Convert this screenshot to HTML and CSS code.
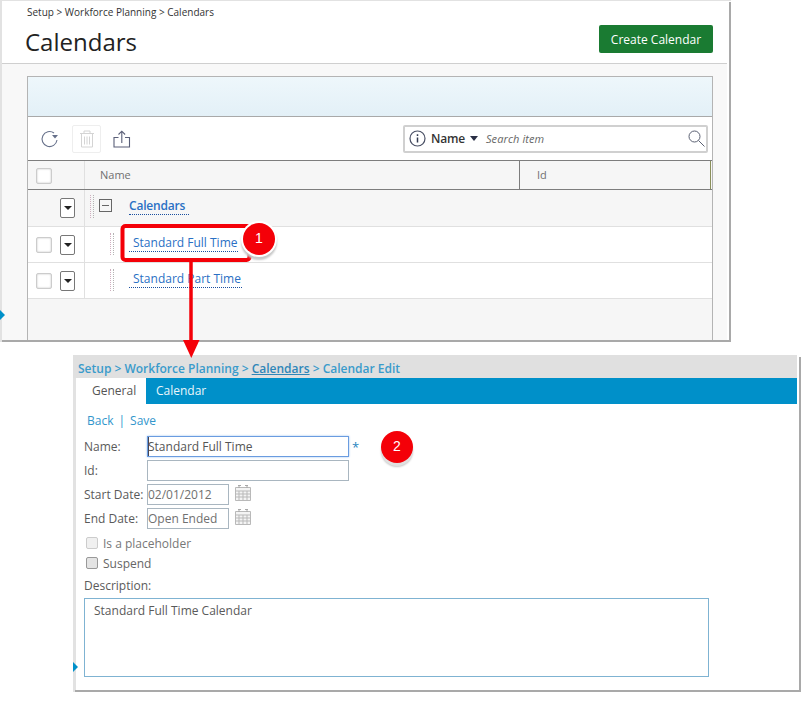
FILE: index.html
```html
<!DOCTYPE html>
<html lang="en">
<head>
<meta charset="utf-8">
<title>Calendars</title>
<link rel="stylesheet" href="styles.css">
</head>
<body>
<section class="win win-list">
  <header class="list-head">
    <div>
      <div class="crumbs">Setup &gt; Workforce Planning &gt; Calendars</div>
      <h1>Calendars</h1>
    </div>
    <button class="create">Create Calendar</button>
  </header>
  <div class="list-body">
    <div class="grid">
      <div class="band"></div>
      <div class="toolbar">
        <svg class="ic-refresh" width="20" height="20" viewBox="0 0 20 20"><path d="M17 11a7.500 7.500 0 1 1-3-7" fill="none" stroke="#66708a" stroke-width="1.100"/><path d="M13 7h6l-3 3.500z" fill="#66708a" transform="translate(-1 -1)"/></svg>
        <span class="trash"><svg width="16" height="18" viewBox="0 0 16 18"><path d="M1 3.500h14M5 3V1h6v2M2.500 4v13h11V4M5.500 6.500v8M8 6.500v8M10.500 6.500v8" fill="none" stroke="#d4d4d4"/></svg></span>
        <svg class="ic-share" width="18" height="18" viewBox="0 0 18 18"><path d="M5.500 7.500H1v9.500h15.500V7.500H12M8.800 13V1.500M5.500 4.500l3.300-3.300 3.300 3.300" fill="none" stroke="#5a5f78" stroke-width="1.100"/></svg>
        <div class="search">
          <svg width="17" height="17" viewBox="0 0 17 17"><circle cx="8.500" cy="8.500" r="7.500" fill="#fff" stroke="#4a5065" stroke-width="1.200"/><path d="M8.500 7.500v5M8.500 4.300v1.700" stroke="#333a50" stroke-width="1.500"/></svg>
          <span class="s-field">Name</span><i class="caret"></i>
          <span class="s-hint">Search item</span>
          <svg class="s-glass" width="17" height="17" viewBox="0 0 17 17"><circle cx="6.500" cy="6.500" r="5.500" fill="none" stroke="#5a6072"/><path d="M10.500 10.500l6 6" stroke="#5a6072"/></svg>
        </div>
      </div>
      <div class="g-head">
        <div class="c-sel"><span class="chk"></span></div>
        <div class="c-name">Name</div>
        <div class="c-id">Id</div>
      </div>
      <div class="g-row r-group">
        <div class="c-sel"><span class="drop"></span></div>
        <div class="c-tree">
          <span class="grip"></span>
          <span class="minus"></span>
          <a class="lnk strong">Calendars</a>
        </div>
      </div>
      <div class="g-row">
        <div class="c-sel"><span class="chk"></span><span class="drop"></span></div>
        <div class="c-tree sub">
          <span class="grip"></span>
          <a class="lnk">Standard Full Time</a>
        </div>
      </div>
      <div class="g-row">
        <div class="c-sel"><span class="chk"></span><span class="drop"></span></div>
        <div class="c-tree sub">
          <span class="grip"></span>
          <a class="lnk">Standard Part Time</a>
        </div>
      </div>
      <div class="g-rest"></div>
    </div>
  </div>
  <i class="pin pin-a"></i>
</section>

<section class="win win-edit">
  <div class="e-crumbs">Setup &gt; Workforce Planning &gt; <u>Calendars</u> &gt; Calendar Edit</div>
  <div class="tabs"><span class="tab on">General</span><span class="tab">Calendar</span></div>
  <div class="form">
    <div class="actions"><a>Back</a><span class="sep">|</span><a>Save</a></div>
    <div class="f-row"><label>Name:</label><input class="in wide focus" value="Standard Full Time"><span class="req">*</span></div>
    <div class="f-row"><label>Id:</label><input class="in wide"></div>
    <div class="f-row"><label>Start Date:</label><input class="in date" value="02/01/2012">
      <svg class="cal" width="16" height="17" viewBox="0 0 16 17"><path d="M.5 3.500h15v13H.5zM.5 7h15M.5 10h15M.5 13h15M4 7v9.500M8 7v9.500M12 7v9.500" fill="#f4f4f4" stroke="#b9b9b9"/><path d="M3 1.500h3M10 1.500h3M4 1v3M12 1v3" stroke="#a8a8a8" fill="none"/></svg></div>
    <div class="f-row"><label>End Date:</label><input class="in date" value="Open Ended">
      <svg class="cal" width="16" height="17" viewBox="0 0 16 17"><path d="M.5 3.500h15v13H.5zM.5 7h15M.5 10h15M.5 13h15M4 7v9.500M8 7v9.500M12 7v9.500" fill="#f4f4f4" stroke="#b9b9b9"/><path d="M3 1.500h3M10 1.500h3M4 1v3M12 1v3" stroke="#a8a8a8" fill="none"/></svg></div>
    <div class="c-row dis"><span class="box"></span>Is a placeholder</div>
    <div class="c-row"><span class="box dark"></span>Suspend</div>
    <div class="d-label">Description:</div>
    <div class="desc">Standard Full Time Calendar</div>
  </div>
  <i class="pin pin-b"></i>
</section>

<svg class="marks" width="812" height="703" viewBox="0 0 812 703">
  <rect x="122.500" y="226" width="127" height="34" rx="3" fill="none" stroke="#f40008" stroke-width="4"/>
  <path d="M191 261v80" stroke="#f40008" stroke-width="3.500"/>
  <path d="M183 340h16.500l-8.200 18z" fill="#f40008"/>
</svg>
<span class="badge b1">1</span>
<span class="badge b2">2</span>
</body>
</html>
```

FILE: styles.css
```css
* { box-sizing: border-box; }
html, body { margin: 0; padding: 0; background: #fff; }
body { width: 812px; height: 703px; position: relative; overflow: hidden; font-family: "Open Sans", "Liberation Sans", sans-serif; font-size: 12px; color: #555; }
a { color: inherit; text-decoration: none; }

.win { position: absolute; display: flex; flex-direction: column; background: #fff; }
.win-list { left: 0; top: 0; width: 731px; height: 342px; padding: 1px 4px 2px 2px; background: #fff; border-top: 1px solid #e2e2e2; box-shadow: inset 2px 0 0 #e2e2e2; }
.win-list::after { content: ""; position: absolute; left: 2px; right: 0; bottom: 0; height: 2px; background: #a9a9a9; }
.win-list::before { content: ""; position: absolute; top: 1px; right: 0; bottom: 0; width: 2px; background: #a9a9a9; }

.list-head { height: 62px; flex: none; display: flex; justify-content: space-between; padding: 0 14px 0 25px; border-bottom: 1px solid #cfcfcf; background: #fff; }
.crumbs { font-size: 10px; line-height: 14px; margin-top: 3px; color: #333; }
h1 { margin: 7px 0 0 -2px; font-size: 24px; font-weight: 400; line-height: 32px; color: #222; }
.create { margin-top: 23px; width: 114px; height: 28px; border: 0; border-radius: 2px; background: #1a7b32; color: #fff; font: 12px "Open Sans", sans-serif; padding: 0; }

.list-body { flex: 1; min-height: 0; padding: 12px 14px 0 25px; background: #f8f8f8; }
.grid { height: 265px; border: 1px solid #b4b4b4; border-bottom: 0; display: flex; flex-direction: column; background: #f6f6f6; }
.band { height: 40px; flex: none; background: linear-gradient(#eef7fb, #e3f0f7); border-bottom: 1px solid #a9a9a9; }
.toolbar { height: 44px; flex: none; background: #fff; border-bottom: 1px solid #7d7d7d; display: flex; align-items: center; padding: 0 5px 0 12px; }
.ic-refresh { margin-top: 1px; }
.trash { width: 29px; height: 28px; margin-left: 12px; border: 1px solid #eee; border-radius: 2px; display: flex; align-items: center; justify-content: center; }
.ic-share { margin-left: 12px; margin-top: 1px; }
.search { margin-left: auto; margin-right: -1px; width: 305px; height: 28px; border: 2px solid #d0d0d0; border-radius: 2px; display: flex; align-items: center; padding-left: 4px; background: #fff; }
.s-field { margin-left: 5px; font-weight: 600; color: #333; font-size: 12px; letter-spacing: -.2px; }
.caret { margin-left: 5px; border: 4px solid transparent; border-top: 5px solid #2a2f45; border-bottom: 0; }
.s-hint { margin-left: 8px; font-style: italic; font-size: 11px; color: #666; letter-spacing: .1px; }
.s-glass { margin-left: auto; margin-right: 1px; }

.g-head { height: 29px; flex: none; display: flex; border-bottom: 1px solid #7d7d7d; background: #f6f6f6; font-size: 11px; color: #707070; }
.c-sel { width: 57px; flex: none; display: flex; align-items: center; justify-content: flex-end; padding-right: 9px; gap: 8px; border-right: 1px solid #e0e0e0; }
.g-head .c-sel { justify-content: flex-start; padding: 1px 0 0 8px; }
.c-name { width: 434px; flex: none; padding: 6px 0 0 15px; }
.c-id { flex: 1; margin-right: 1px; padding: 6px 0 0 17px; border-left: 1px solid #7d7d7d; border-right: 1px solid #8a8f5a; }
.chk { width: 16px; height: 16px; border: 1px solid #ccc; border-radius: 2px; background: #fff; box-shadow: inset 0 0 2px #bbb; flex: none; }
.drop { width: 15px; height: 20px; border: 1px solid #777; border-radius: 2px; background: #fff; display: flex; align-items: center; justify-content: center; flex: none; }
.drop::after { content: ""; border: 4px solid transparent; border-top: 4px solid #222; border-bottom: 0; }

.g-row { height: 36px; flex: none; display: flex; border-bottom: 1px solid #e0e0e0; background: #fff; }
.r-group { height: 37px; background: #f6f6f6; }
.c-tree { flex: 1; display: flex; align-items: center; padding-left: 5px; position: relative; }
.grip { width: 4px; height: 23px; margin-top: -4px; border-left: 1px dotted #d0aebf; border-right: 1px dotted #b4b4b4; flex: none; }
.minus { width: 13px; height: 13px; margin: -5px 0 0 5px; border: 1px solid #666; position: relative; flex: none; }
.minus::after { content: ""; position: absolute; left: 2px; right: 2px; top: 5px; height: 1px; background: #666; }
.lnk { color: #2a70c4; font-size: 12px; line-height: 16px; border-bottom: 1px dotted #1a4fa0; padding: 0 1px 0 4px; }
.strong { font-weight: 600; letter-spacing: -.2px; padding: 0 1px 0 0; margin: -3px 0 0 17px; width: 60px; }
.sub { padding-left: 25px; }
.sub .grip { height: 22px; margin-top: -1px; }
.sub .lnk { margin: -3px 0 0 15px; }
.g-rest { flex: 1; }

.pin { position: absolute; width: 0; height: 0; border: 5px solid transparent; border-left: 5px solid #0090c9; border-right: 0; }
.pin-a { left: 0; top: 309px; }
.pin-b { left: 0; top: 307px; }

.win-edit { left: 73px; top: 355px; width: 728px; height: 337px; padding: 0 4px 2px 3px; box-shadow: inset 3px 0 0 #e2e2e2; }
.win-edit::before { content: ""; position: absolute; top: 2px; right: 0; bottom: 0; width: 2px; background: #a9a9a9; }
.win-edit::after { content: ""; position: absolute; left: 2px; right: 0; bottom: 0; height: 2px; background: #a9a9a9; }
.e-crumbs { margin-left: -3px; height: 23px; background: #e0e0e0; padding: 6px 0 0 5px; font-size: 12px; font-weight: 600; line-height: 15px; color: #3a9bcb; flex: none; }
.e-crumbs u { color: #2f86b8; }
.tabs { height: 26px; flex: none; display: flex; background: #0090c9; font-size: 12px; line-height: 26px; color: #eaf6fb; }
.tab { padding: 0 10px; }
.tab.on { width: 70px; padding: 0 0 0 16px; background: #fff; color: #555; }
.form { flex: 1; padding: 9px 0 0 8px; position: relative; }
.actions { height: 16px; line-height: 16px; padding-left: 3px; color: #3296cc; display: flex; }
.sep { margin: 0 5px; color: #3296cc; }
.f-row { display: flex; align-items: center; height: 24px; }
.actions + .f-row { margin-top: 5px; }
label { width: 63px; flex: none; padding-top: 1px; font-size: 12px; color: #5a5a5a; }
.in { height: 21px; border: 1px solid #a9b6c0; padding: 1px 0 0; font: 12px "Open Sans", sans-serif; color: #707070; outline: 0; background: #fff; }
.wide { width: 202px; }
.date { width: 82px; }
.focus { border-color: #6a9ce0; box-shadow: 0 0 2px #a0c4f0, inset 1px 0 0 #445; color: #555; }
.req { margin-left: 3px; color: #2a86c0; font-size: 13px; line-height: 20px; margin-top: 2px; }
.cal { margin-left: 6px; margin-top: -3px; }
.c-row { display: flex; align-items: center; height: 20px; padding-left: 2px; font-size: 12px; color: #666; }
.f-row + .c-row { margin-top: 3px; }
.dis { color: #777; }
.box { width: 12px; height: 12px; margin-right: 5px; border: 1px solid #ccc; border-radius: 2px; background: #f0f0f0; flex: none; }
.box.dark { border-color: #999; background: #e4e4e4; }
.d-label { height: 16px; margin-top: 5px; line-height: 16px; font-size: 12px; color: #5a5a5a; }
.desc { width: 625px; height: 79px; margin-top: 4px; border: 1px solid #7fb3d2; padding: 4px 9px; font-size: 12px; line-height: 16px; color: #5a5a5a; }

.marks { position: absolute; left: 0; top: 0; pointer-events: none; }
.badge { position: absolute; width: 32px; height: 32px; border-radius: 50%; background: #f40008; color: #fff; font: 14px/31px "Liberation Sans", sans-serif; text-align: center; }
.b1 { left: 243px; top: 223px; box-shadow: 0 0 0 2px #fff, 0 3px 2px 2px #c8c8c8; }
.b2 { left: 381px; top: 431px; box-shadow: 0 3px 0 #e0e0e0, 0 4px 2px #c8c8c8; }
```
